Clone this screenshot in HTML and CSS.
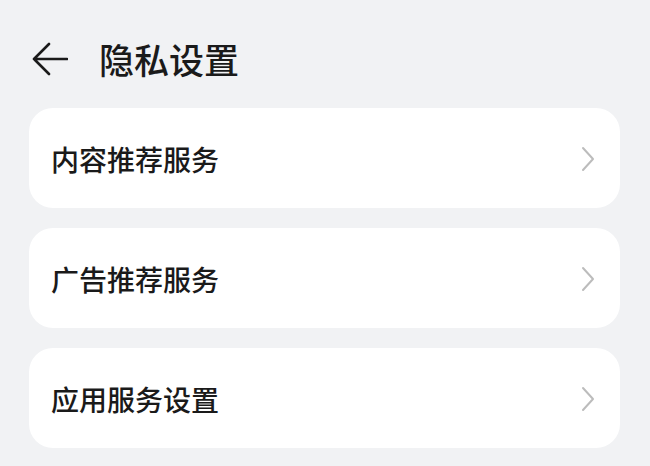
FILE: index.html
```html
<!DOCTYPE html>
<html lang="zh-CN">
<head>
<meta charset="utf-8">
<title>隐私设置</title>
<link rel="stylesheet" href="styles.css">
</head>
<body>
<div class="page">
  <header class="header">
    <svg class="back" width="36" height="34" viewBox="0 0 36 34" aria-hidden="true">
      <path d="M35 17 H2 M17 2 L2 17 L17 32" fill="none" stroke="#1a1a1a" stroke-width="2.6" stroke-linecap="round" stroke-linejoin="round"/>
    </svg>
    <h1 class="title">隐私设置</h1>
  </header>
  <div class="list">
    <div class="card">
      <span class="label">内容推荐服务</span>
      <svg class="chev" width="14" height="26" viewBox="0 0 14 26" aria-hidden="true"><path d="M2 2 L12 13 L2 24" fill="none" stroke="#bcbcbc" stroke-width="2" stroke-linecap="round" stroke-linejoin="round"/></svg>
    </div>
    <div class="card">
      <span class="label">广告推荐服务</span>
      <svg class="chev" width="14" height="26" viewBox="0 0 14 26" aria-hidden="true"><path d="M2 2 L12 13 L2 24" fill="none" stroke="#bcbcbc" stroke-width="2" stroke-linecap="round" stroke-linejoin="round"/></svg>
    </div>
    <div class="card">
      <span class="label">应用服务设置</span>
      <svg class="chev" width="14" height="26" viewBox="0 0 14 26" aria-hidden="true"><path d="M2 2 L12 13 L2 24" fill="none" stroke="#bcbcbc" stroke-width="2" stroke-linecap="round" stroke-linejoin="round"/></svg>
    </div>
  </div>
</div>
</body>
</html>
```
FILE: styles.css
```css
* { box-sizing: border-box; }
html, body {
  margin: 0;
  padding: 0;
  background: #f1f2f4;
}
body {
  width: 650px;
  height: 466px;
  overflow: hidden;
  font-family: "Noto Sans CJK SC", "Noto Sans", sans-serif;
  color: #1a1a1a;
}
.page {
  padding: 0 30px 0 29px;
}
.header {
  display: flex;
  align-items: center;
  height: 100px;
  padding: 17px 0 0 3px;
  margin-bottom: 8px;
  gap: 31px;
}
.back {
  display: block;
  flex: none;
}
.title {
  margin: 0;
  font-size: 35px;
  font-weight: 500;
  line-height: 1;
  letter-spacing: 0;
}
.list {
  display: flex;
  flex-direction: column;
  gap: 20px;
}
.card {
  height: 100px;
  background: #ffffff;
  border-radius: 24px;
  display: flex;
  align-items: center;
  justify-content: space-between;
  padding: 2px 25px 0 22px;
}
.label {
  font-size: 28px;
  font-weight: 500;
  line-height: 1;
}
.chev {
  display: block;
  flex: none;
}
```
